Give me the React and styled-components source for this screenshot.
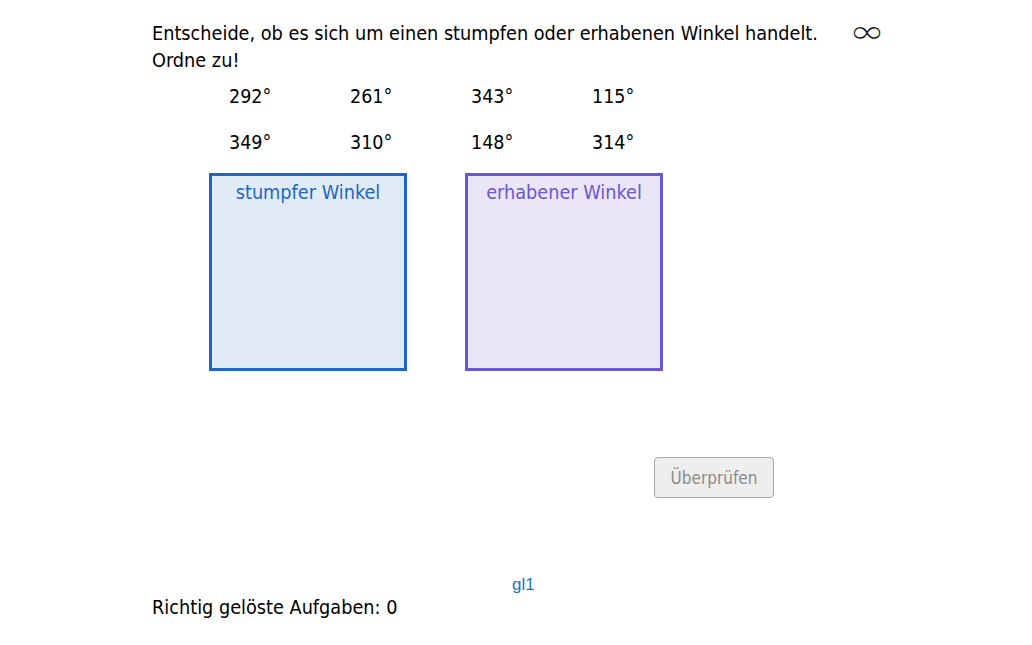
import React from 'react';
import styled, { createGlobalStyle } from 'styled-components';

const GlobalStyle = createGlobalStyle`
  html, body {
    margin: 0;
    padding: 0;
    background: #fff;
  }
  body {
    font-family: 'DejaVu Sans Condensed', 'Liberation Sans', sans-serif;
    color: #000;
  }
`;

const Applet = styled.div`
  width: 1032px;
  height: 645px;
  box-sizing: border-box;
  padding: 20px 0 0 152px;
  display: flex;
  flex-direction: column;
`;

const Header = styled.div`
  display: flex;
  align-items: flex-start;
  width: 732px;
`;

const Question = styled.p`
  margin: 0;
  flex: 1;
  font-size: 19.7px;
  line-height: 27px;
`;

const Infinity = styled.span`
  display: inline-block;
  font-family: 'DejaVu Sans', sans-serif;
  font-size: 34px;
  line-height: 27px;
  margin: -2px 3px 0 0;
  transform: scaleX(1.3);
  -webkit-text-stroke: 0.7px #fff;
`;

const AngleGrid = styled.div`
  display: grid;
  grid-template-columns: repeat(4, 121px);
  row-gap: 19px;
  margin: 9px 0 0 77px;
  font-size: 19.5px;
  line-height: 27px;
`;

const Bins = styled.div`
  display: flex;
  gap: 58px;
  margin: 17px 0 0 57px;
`;

const Bin = styled.div`
  width: 198px;
  height: 198px;
  box-sizing: border-box;
  border: 3px solid ${p => p.$border};
  background: ${p => p.$fill};
  color: ${p => p.$border};
  text-align: center;
  font-size: 19.7px;
  line-height: 24px;
  padding-top: 5px;
`;

const ButtonRow = styled.div`
  display: flex;
  margin: 86px 0 0 502px;
`;

const CheckButton = styled.button`
  width: 120px;
  height: 41px;
  box-sizing: border-box;
  border: 1px solid #a8a8a8;
  border-radius: 4px;
  background: #eeeeee;
  color: #8a8a8a;
  font-family: inherit;
  font-size: 17px;
  padding: 0;
`;

const Footer = styled.div`
  margin-top: 77px;
`;

const Label = styled.span`
  display: block;
  margin-left: 360px;
  font-family: 'Liberation Sans', sans-serif;
  font-size: 17px;
  line-height: 20px;
  color: #1e6fcf;
`;

const Score = styled.p`
  margin: 0;
  font-size: 19.7px;
  line-height: 26px;
`;

const angles = ['292°', '261°', '343°', '115°', '349°', '310°', '148°', '314°'];

export default function App() {
  return (
    <>
      <GlobalStyle />
      <Applet>
        <Header>
          <Question>
            Entscheide, ob es sich um einen stumpfen oder erhabenen Winkel handelt.
            <br />
            Ordne zu!
          </Question>
          <Infinity>∞</Infinity>
        </Header>
        <AngleGrid>
          {angles.map(a => (
            <span key={a}>{a}</span>
          ))}
        </AngleGrid>
        <Bins>
          <Bin $border="#1f66c6" $fill="#e1ebf6">stumpfer Winkel</Bin>
          <Bin $border="#6a57d4" $fill="#ebe6f7">erhabener Winkel</Bin>
        </Bins>
        <ButtonRow>
          <CheckButton>Überprüfen</CheckButton>
        </ButtonRow>
        <Footer>
          <Label>gl1</Label>
          <Score>Richtig gelöste Aufgaben: 0</Score>
        </Footer>
      </Applet>
    </>
  );
}
